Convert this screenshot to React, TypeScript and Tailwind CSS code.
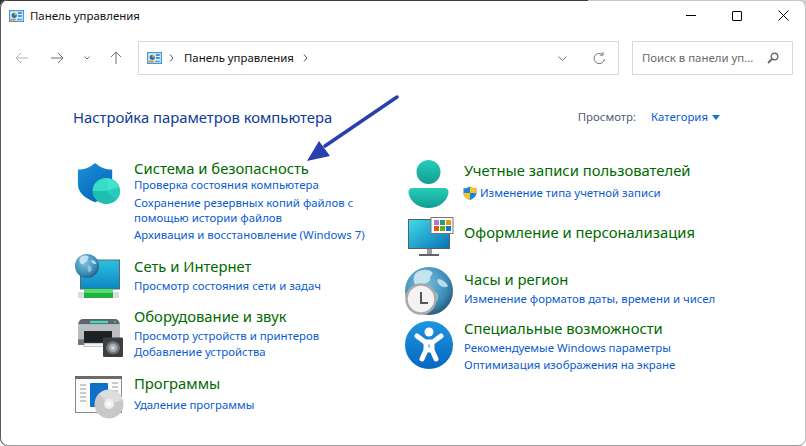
const FONT = "font-['Noto_Sans','Open_Sans',sans-serif]";

function CpIcon({ s = 15 }: { s?: number }) {
  return (
    <svg width={s} height={s * 0.8} viewBox="0 0 20 16" className="shrink-0">
      <rect x="0.5" y="0.5" width="19" height="15" fill="#8fd0f0" stroke="#2a86c8" />
      <rect x="2" y="2" width="16" height="12" fill="#d8f0fb" />
      <circle cx="7" cy="7" r="3.5" fill="#1f6fc0" />
      <path d="M7 7V3.5A3.5 3.5 0 0 1 10.5 7Z" fill="#f2b233" />
      <rect x="12" y="3" width="5" height="2" fill="#1f6fc0" />
      <rect x="12" y="7" width="5" height="2" fill="#1f6fc0" />
      <rect x="2" y="11.5" width="7" height="2.5" fill="#ee8a1d" />
      <rect x="11" y="11.5" width="6" height="2" fill="#4ba3dc" />
    </svg>
  );
}

function Shield() {
  return (
    <svg width="45" height="43" viewBox="0 0 46 46" preserveAspectRatio="none">
      <defs>
        <linearGradient id="sh" x1="0" y1="0" x2="0.6" y2="1">
          <stop offset="0" stopColor="#1b90dc" />
          <stop offset="1" stopColor="#0668b8" />
        </linearGradient>
      </defs>
      <path d="M20.5 1 C26 6 31 8 38 8 V24 C38 33 30 39 20.5 43 C11 39 3 33 3 24 V8 C10 8 15 6 20.5 1Z" fill="url(#sh)" />
      <circle cx="32" cy="31" r="14" fill="#1fbfb0" />
      <path d="M32 31V17A14 14 0 0 1 45 27Z" fill="#3fe3cf" />
      <path d="M32 31L45 27A14 14 0 0 1 42 41Z" fill="#27cdbb" />
      <path d="M32 31V17A14 14 0 0 0 18 31Z" fill="#37dcc8" />
    </svg>
  );
}

function Globe({ id, size }: { id: string; size: number }) {
  return (
    <svg width={size} height={size} viewBox="0 0 48 48">
      <defs>
        <radialGradient id={id} cx="0.4" cy="0.35" r="0.75">
          <stop offset="0" stopColor="#7cc3e2" />
          <stop offset="0.65" stopColor="#3c8bb6" />
          <stop offset="1" stopColor="#1b4a66" />
        </radialGradient>
      </defs>
      <circle cx="24" cy="24" r="24" fill={`url(#${id})`} />
      <path d="M12 5c5-3 12-3 15 0 2 3-3 4-2 7s-5 3-7 7-6 1-8-2-2-9 2-12Z" fill="#d4ecf5" opacity="0.85" />
      <path d="M33 12c4 0 8 3 10 7-2 2-5 1-7 0s-5-5-3-7Z" fill="#d4ecf5" opacity="0.8" />
      <path d="M26 24c3-1 6 1 7 4s-1 7-4 9c-3-1-5-9-3-13Z" fill="#bcdde9" opacity="0.6" />
    </svg>
  );
}

function Network() {
  return (
    <div className="relative h-[44px] w-[45px]">
      <svg width="45" height="44" viewBox="0 0 45 44" className="absolute left-0 top-0">
        <defs>
          <linearGradient id="scr" x1="0" y1="0" x2="0" y2="1">
            <stop offset="0" stopColor="#2cc0e0" />
            <stop offset="1" stopColor="#0f87c4" />
          </linearGradient>
        </defs>
        <rect x="5.5" y="6" width="39" height="29" fill="url(#scr)" stroke="#5a6a72" />
        <rect x="3" y="38" width="41" height="6" fill="#d8dcdc" />
        <rect x="9" y="35" width="29" height="9" rx="1" fill="#4fe06a" />
        <rect x="9" y="39" width="29" height="5" fill="#22b13f" />
      </svg>
      <div className="absolute left-0 top-0">
        <Globe id="g1" size={24} />
      </div>
    </div>
  );
}

function Printer() {
  return (
    <svg width="45" height="38" viewBox="0 0 45 41" preserveAspectRatio="none">
      <path d="M0 6 Q1 0 5 0 H37 Q41 0 42 6Z" fill="#5e6468" />
      <rect x="12" y="2" width="18" height="2.5" fill="#3fd9c4" />
      <rect x="0" y="6" width="42" height="20" fill="#b9bfc3" />
      <circle cx="37" cy="3" r="1" fill="#3fd65a" />
      <rect x="6" y="13" width="28" height="13" fill="#1e2225" />
      <rect x="6" y="26" width="22" height="4" fill="#f2f2f2" stroke="#8a8f92" strokeWidth="0.5" />
      <rect x="0" y="22" width="6" height="6" fill="#6e7478" />
      <rect x="25" y="20" width="20" height="21" rx="1" fill="#3b3f42" />
      <circle cx="35" cy="31" r="7" fill="#6f7478" />
      <circle cx="35" cy="31" r="4.5" fill="#a4a9ac" />
      <circle cx="35" cy="31" r="2" fill="#d3d6d8" />
    </svg>
  );
}

function Programs() {
  return (
    <svg width="49" height="43" viewBox="0 0 49 43">
      <rect x="0.5" y="0.5" width="46" height="36" fill="#fbfbfb" stroke="#8a8a8a" />
      <rect x="0" y="0" width="47" height="3" fill="#6b6b6b" />
      <rect x="15" y="7" width="18" height="24" rx="1" fill="#0f70c8" />
      <path d="M5 9h6M5 13h6M5 17h6M5 21h6M5 25h6M37 7h6M37 11h6M37 15h6M37 19h6" stroke="#9a9a9a" strokeWidth="1" />
      <circle cx="34" cy="28" r="14.5" fill="#c6c8ca" />
      <path d="M34 28 L24 18 A14.5 14.5 0 0 1 48 24Z" fill="#dcdddf" />
      <circle cx="34" cy="28" r="5" fill="#eeeeee" />
      <circle cx="34" cy="28" r="2" fill="#ffffff" />
    </svg>
  );
}

function User() {
  return (
    <svg width="41" height="49" viewBox="0 0 41 49">
      <defs>
        <linearGradient id="usr" x1="0" y1="0" x2="0" y2="1">
          <stop offset="0" stopColor="#27cdb8" />
          <stop offset="1" stopColor="#129c93" />
        </linearGradient>
      </defs>
      <circle cx="20.5" cy="12" r="12" fill="url(#usr)" />
      <path d="M5 28 H36 Q41 28 40.5 33 C39 42 30 48 20.5 48 C11 48 2 42 0.5 33 Q0 28 5 28Z" fill="url(#usr)" />
    </svg>
  );
}

function Monitor() {
  return (
    <svg width="46" height="40" viewBox="0 0 46 40">
      <defs>
        <linearGradient id="mon" x1="0" y1="0" x2="1" y2="1">
          <stop offset="0" stopColor="#3fdde6" />
          <stop offset="1" stopColor="#0a6fb8" />
        </linearGradient>
      </defs>
      <rect x="0.5" y="2.5" width="41" height="29" fill="url(#mon)" stroke="#55606a" />
      <rect x="19" y="32" width="5" height="5" fill="#9a9fa3" />
      <rect x="11" y="37" width="20" height="2" fill="#5d6266" />
      <rect x="23" y="0.5" width="22" height="16" fill="#ffffff" stroke="#777" />
      <rect x="26" y="3" width="5" height="5" fill="#a57ad0" />
      <rect x="32" y="3" width="5" height="5" fill="#1f9e7c" />
      <rect x="38" y="3" width="5" height="5" fill="#f2930f" />
      <rect x="26" y="9" width="5" height="5" fill="#e2521a" />
      <rect x="32" y="9" width="5" height="5" fill="#66aa22" />
      <rect x="38" y="9" width="5" height="5" fill="#0a78d0" />
    </svg>
  );
}

function ClockGlobe() {
  return (
    <div className="relative h-[48px] w-[48px]">
      <Globe id="g2" size={48} />
      <svg width="32" height="32" viewBox="0 0 32 32" className="absolute bottom-0 left-0">
        <circle cx="16" cy="16" r="14.5" fill="#f3f3f3" stroke="#a9a9a9" strokeWidth="2.5" />
        <path d="M16 9V20H23" fill="none" stroke="#555" strokeWidth="2" />
      </svg>
    </div>
  );
}

function Access() {
  return (
    <svg width="48" height="48" viewBox="0 0 48 48">
      <defs>
        <linearGradient id="acc" x1="0" y1="0" x2="0" y2="1">
          <stop offset="0" stopColor="#1e95e0" />
          <stop offset="1" stopColor="#0568bf" />
        </linearGradient>
      </defs>
      <circle cx="24" cy="24" r="24" fill="url(#acc)" />
      <circle cx="24" cy="11" r="4.5" fill="#fff" />
      <path d="M12 15 L20 21 H28 L36 15 M21 21 V29 L17 38 M27 21 V29 L31 38 M21 29 H27" fill="none" stroke="#fff" strokeWidth="5" strokeLinecap="round" strokeLinejoin="round" />
    </svg>
  );
}

function Uac() {
  return (
    <svg width="14" height="14" viewBox="0 0 14 14" className="shrink-0">
      <path d="M7 0.5 C9 1.8 11 2.3 13.5 2.3 V7 C13.5 10.5 10.5 12.5 7 14 C3.5 12.5 0.5 10.5 0.5 7 V2.3 C3 2.3 5 1.8 7 0.5Z" fill="#1d84d8" />
      <path d="M7 0.5 C9 1.8 11 2.3 13.5 2.3 V7 H7Z" fill="#f7c325" />
      <path d="M7 7 H0.5 C0.5 10.5 3.5 12.5 7 14Z" fill="#f7c325" />
    </svg>
  );
}

function Category({
  icon,
  title,
  links,
  className,
  linkClass = "",
  iconClass,
}: {
  icon: React.ReactNode;
  title: string;
  links: React.ReactNode[];
  className: string;
  linkClass?: string;
  iconClass: string;
}) {
  return (
    <div className={`flex ${className}`}>
      <div className={`w-[60px] shrink-0 ${iconClass}`}>{icon}</div>
      <div className="min-w-0 flex-1">
        <div className="text-[14.8px] leading-[20px] text-[#006a00]">{title}</div>
        <div className={`text-[11.4px] leading-[16px] text-[#0a5bd3] ${linkClass}`}>{links}</div>
      </div>
    </div>
  );
}

export default function App() {
  return (
    <div className={`${FONT} h-[446px] w-[806px] overflow-hidden bg-white bg-[linear-gradient(90deg,#333_50%,#d0d0d0_50%)] bg-[length:100%_10px] bg-no-repeat`}>
      <div className="flex h-[446px] flex-col overflow-hidden rounded-[8px] bg-white shadow-[inset_1px_0_0_#5a5a5a,inset_-1px_0_0_#c4c4c4,inset_0_-1px_0_#9a9a9a]">
        <div className="h-px bg-[linear-gradient(90deg,#3a3a3a_73%,#c8c8c8_73%)]" />
        <div className="flex h-[32px] items-start">
          <div className="flex items-center gap-[6px] pl-[9px] pt-[7px]">
            <CpIcon />
            <span className="text-[11.4px] leading-[16px] text-[#111]">Панель управления</span>
          </div>
          <div className="ml-auto flex h-[29px] items-center">
            <button className="flex h-[29px] w-[46px] items-center justify-center">
              <span className="h-px w-[10px] bg-black" />
            </button>
            <button className="flex h-[29px] w-[46px] items-center justify-center">
              <span className="h-[10px] w-[10px] rounded-[1px] border border-black" />
            </button>
            <button className="flex h-[29px] w-[46px] items-center justify-center">
              <svg width="11" height="11" viewBox="0 0 11 11">
                <path d="M0.5 0.5L10.5 10.5M10.5 0.5L0.5 10.5" stroke="#000" strokeWidth="1" />
              </svg>
            </button>
          </div>
        </div>

        <div className="mt-[8px] flex h-[34px] items-center pr-[13px]">
          <div className="flex w-[138px] shrink-0 items-center">
            <svg width="14" height="12" viewBox="0 0 14 12" className="ml-[15px]">
              <path d="M13 6H1M6 1L1 6L6 11" fill="none" stroke="#b3b3b3" strokeWidth="1" />
            </svg>
            <svg width="14" height="12" viewBox="0 0 14 12" className="ml-[21px]">
              <path d="M1 6H13M8 1L13 6L8 11" fill="none" stroke="#707070" strokeWidth="1" />
            </svg>
            <svg width="6" height="4" viewBox="0 0 6 4" className="ml-[20px]">
              <path d="M0.5 0.5L3 3L5.5 0.5" fill="none" stroke="#707070" strokeWidth="1" />
            </svg>
            <svg width="12" height="14" viewBox="0 0 12 14" className="ml-[20px]">
              <path d="M6 13V1M1 6L6 1L11 6" fill="none" stroke="#707070" strokeWidth="1" />
            </svg>
          </div>
          <div className="flex h-[34px] w-[481px] items-center border border-[#d9d9d9] pl-[8px] pr-[12px]">
            <CpIcon />
            <svg width="5" height="8" viewBox="0 0 5 8" className="ml-[7px]">
              <path d="M1 0.5L4 4L1 7.5" fill="none" stroke="#555" strokeWidth="1" />
            </svg>
            <span className="ml-[10px] text-[11.4px] leading-[16px] text-[#111]">Панель управления</span>
            <svg width="5" height="8" viewBox="0 0 5 8" className="ml-[9px]">
              <path d="M1 0.5L4 4L1 7.5" fill="none" stroke="#555" strokeWidth="1" />
            </svg>
            <svg width="9" height="5" viewBox="0 0 9 5" className="ml-auto">
              <path d="M0.5 0.5L4.5 4.5L8.5 0.5" fill="none" stroke="#7a7a7a" strokeWidth="1" />
            </svg>
            <svg width="13" height="13" viewBox="0 0 13 13" className="ml-[26px]">
              <path d="M11.5 7A5.2 5.2 0 1 1 9.8 2.6M10 0V3.2H6.8" fill="none" stroke="#7a7a7a" strokeWidth="1" />
            </svg>
          </div>
          <div className="ml-[13px] flex h-[34px] flex-1 items-center border border-[#d9d9d9] pl-[9px] pr-[13px]">
            <span className="text-[11.4px] leading-[16px] text-[#6b6b6b]">Поиск в панели уп...</span>
            <svg width="12" height="12" viewBox="0 0 12 12" className="ml-auto">
              <circle cx="7.5" cy="4.5" r="3.3" fill="none" stroke="#6b6b6b" strokeWidth="1.4" />
              <path d="M5 7L1 11" stroke="#6b6b6b" strokeWidth="2" />
            </svg>
          </div>
        </div>

        <div className="relative flex-1">
          <div className="flex items-center pl-[73px] pr-[86px] pt-[32px]">
            <span className="text-[14.8px] leading-[20px] text-[#0e3a9a]">Настройка параметров компьютера</span>
            <span className="ml-auto text-[11.4px] leading-[16px] text-[#4f5d7a]">Просмотр:</span>
            <span className="ml-[15px] text-[11.4px] leading-[16px] text-[#0a5bd3]">Категория</span>
            <svg width="8" height="5" viewBox="0 0 8 5" className="ml-[4px]">
              <path d="M0 0H8L4 5Z" fill="#1572d6" />
            </svg>
          </div>

          <div className="flex pl-[74px] pt-[31px]">
            <div className="w-[330px] shrink-0">
              <Category
                className="h-[98px] pr-[30px]"
                iconClass="pl-[1px] pt-[4px]"
                linkClass="-mt-[1px]"
                icon={<Shield />}
                title="Система и безопасность"
                links={[
                  <div key="1" className="mb-[2px]">Проверка состояния компьютера</div>,
                  <div key="2" className="mb-[2px] leading-[15px]">Сохранение резервных копий файлов с помощью истории файлов</div>,
                  <div key="3">Архивация и восстановление (Windows 7)</div>,
                ]}
              />
              <Category
                className="h-[49px]"
                iconClass="pl-[1px]"
                linkClass="pt-[2px]"
                icon={<div className="-mt-[2px]"><Network /></div>}
                title="Сеть и Интернет"
                links={[<div key="1">Просмотр состояния сети и задач</div>]}
              />
              <Category
                className="mt-[1px] h-[60px]"
                iconClass="pl-[4px] pt-[13px]"
                linkClass="pt-[2px]"
                icon={<Printer />}
                title="Оборудование и звук"
                links={[
                  <div key="1">Просмотр устройств и принтеров</div>,
                  <div key="2">Добавление устройства</div>,
                ]}
              />
              <Category
                className="mt-[7px]"
                iconClass="pl-[1px] pt-[3px]"
                linkClass="pt-[4px]"
                icon={<Programs />}
                title="Программы"
                links={[<div key="1">Удаление программы</div>]}
              />
            </div>
            <div className="flex-1">
              <Category
                className="mt-[2px] h-[54px]"
                iconClass="pl-[4px]"
                linkClass="pt-[5px]"
                icon={<User />}
                title="Учетные записи пользователей"
                links={[
                  <div key="1" className="-ml-[1px] flex items-center gap-[3px]">
                    <Uac />
                    Изменение типа учетной записи
                  </div>,
                ]}
              />
              <Category
                className="mt-[8px] h-[47px]"
                iconClass="pl-[4px]"
                icon={<div className="-mt-[5px]"><Monitor /></div>}
                title="Оформление и персонализация"
                links={[]}
              />
              <Category
                className="h-[49px]"
                iconClass="pl-[1px]"
                linkClass="pt-[2px]"
                icon={<div className="-mt-[2px]"><ClockGlobe /></div>}
                title="Часы и регион"
                links={[<div key="1">Изменение форматов даты, времени и чисел</div>]}
              />
              <Category
                className=""
                iconClass="pl-[1px] pt-[3px]"
                linkClass="pt-[2px]"
                icon={<Access />}
                title="Специальные возможности"
                links={[
                  <div key="1">Рекомендуемые Windows параметры</div>,
                  <div key="2" className="mt-px">Оптимизация изображения на экране</div>,
                ]}
              />
            </div>
          </div>

          <svg width="100" height="70" viewBox="0 0 100 70" className="absolute left-[303px] top-[20px]">
            <path d="M94 2L22 51" stroke="#2a3fae" strokeWidth="3.5" strokeLinecap="round" />
            <path d="M4 66L16 46L27 61Z" fill="#2a3fae" />
          </svg>
        </div>
      </div>
    </div>
  );
}
